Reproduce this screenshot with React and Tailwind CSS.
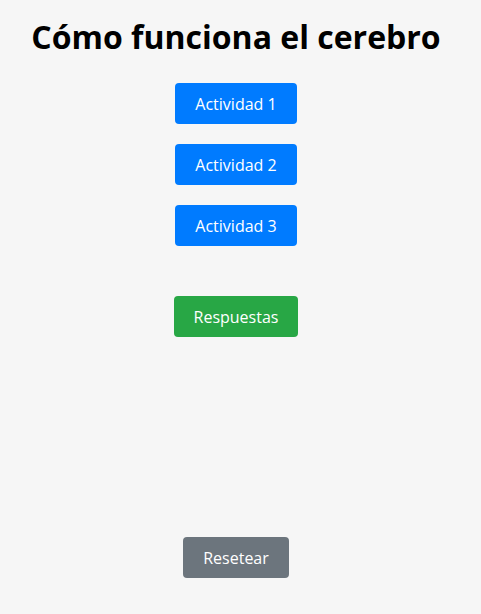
export default function App() {
  const blue = "flex items-center justify-center w-[122px] h-[41px] rounded-[4px] bg-[#007bff] text-white text-[16px]";
  return (
    <div className="min-h-[614px] w-[481px] bg-[#f6f6f6] font-['Open_Sans',sans-serif]">
      <div className="w-[472px] flex flex-col items-center">
        <h1 className="mt-[18px] text-[32px] leading-[1.2] font-bold text-black tracking-[0px]">Cómo funciona el cerebro</h1>
        <div className="mt-[27px] flex flex-col items-center gap-[20px]">
          <button className={blue}>Actividad 1</button>
          <button className={blue}>Actividad 2</button>
          <button className={blue}>Actividad 3</button>
        </div>
        <button className="mt-[50px] flex items-center justify-center w-[124px] h-[41px] rounded-[4px] bg-[#28a745] text-white text-[16px]">Respuestas</button>
        <button className="mt-[200px] flex items-center justify-center w-[106px] h-[41px] rounded-[4px] bg-[#6c757d] text-white text-[16px]">Resetear</button>
      </div>
    </div>
  );
}
